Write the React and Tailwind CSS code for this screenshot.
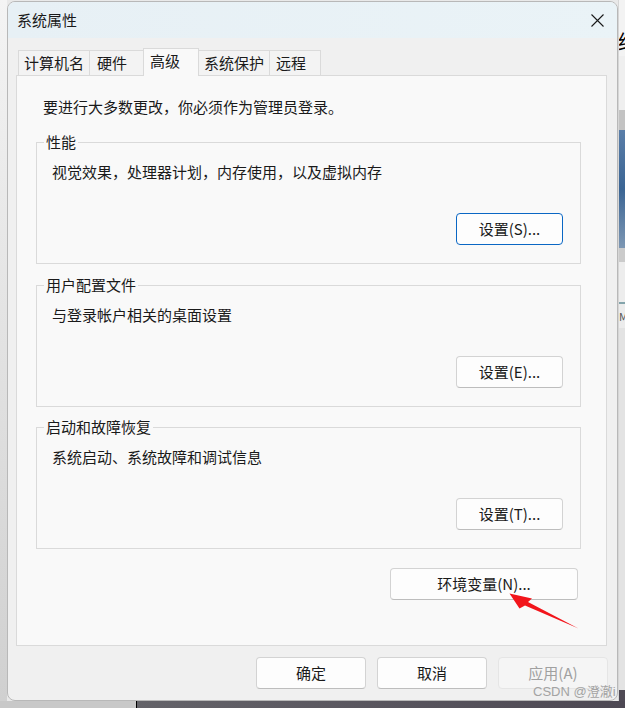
import React from "react";

function Btn({ children, w, primary, disabled }) {
  const style = primary
    ? "border-[#0a67c4] bg-[#fdfdfd] text-[#1a1a1a]"
    : disabled
    ? "border-[#e5e5e5] bg-[#f5f5f5] text-[#a0a0a0]"
    : "border-[#d3d3d3] border-b-[#bdbdbd] bg-[#fdfdfd] text-[#1a1a1a]";
  return (
    <div
      className={`${w} h-[32px] shrink-0 flex items-center justify-center rounded-[4px] border leading-[20px] ${style}`}
    >
      {children}
    </div>
  );
}

function Group({ title, text, btn, primary, className }) {
  return (
    <fieldset className={`w-[545px] border border-[#dadada] pb-[18px] ${className}`}>
      <legend className="ml-[7px] px-[2px] leading-[20px]">{title}</legend>
      <div className="pl-[15px] mt-[10px] leading-[20px]">{text}</div>
      <div className="flex justify-end pr-[17px] mt-[31px]">
        <Btn w="w-[107px]" primary={primary}>
          {btn}
        </Btn>
      </div>
    </fieldset>
  );
}

function Tab({ label, w, pl, selected, borders }) {
  if (selected) {
    return (
      <div
        className={`${w} h-[28px] flex items-center ${pl} pb-[2px] border-l border-t border-r border-[#dadada] bg-[#f9f9f9]`}
      >
        {label}
      </div>
    );
  }
  return (
    <div
      className={`${w} h-[26px] flex items-center ${pl} border-t border-b ${borders} border-[#dadada] bg-[#f3f3f3]`}
    >
      {label}
    </div>
  );
}

function Window() {
  return (
    <div className="mt-[1px] w-[611px] h-[700px] shrink-0 flex flex-col rounded-[8px] border border-[#b8b8b8] bg-[#f0f0f0] overflow-hidden">
      <div className="h-[36px] shrink-0 flex items-center justify-between pl-[9px] pr-[13px] bg-gradient-to-r from-[#e7f0f5] to-[#eaf3f7]">
        <span className="leading-[20px]">系统属性</span>
        <svg width="13" height="13" viewBox="0 0 13 13">
          <path d="M0.5 0.5L12.5 12.5M12.5 0.5L0.5 12.5" stroke="#1a1a1a" strokeWidth="1.1" />
        </svg>
      </div>
      <div className="flex flex-col pl-[8px] pt-[10px]">
        <div className="relative z-10 flex items-end h-[28px] -mb-px ml-[2px]">
          <Tab label="计算机名" w="w-[71px]" pl="pl-[5px]" borders="border-l" />
          <Tab label="硬件" w="w-[54px]" pl="pl-[7px]" borders="border-l" />
          <Tab label="高级" w="w-[56px]" pl="pl-[6px]" selected />
          <Tab label="系统保护" w="w-[70px]" pl="pl-[5px]" borders="" />
          <Tab label="远程" w="w-[52px]" pl="pl-[6px]" borders="border-l border-r" />
        </div>
        <div className="w-[591px] h-[571px] border border-[#dadada] bg-[#f9f9f9] flex flex-col pl-[19px] pt-[21px]">
          <div className="ml-[7px] leading-[20px]">要进行大多数更改，你必须作为管理员登录。</div>
          <div className="w-[545px] flex flex-col mt-[15px]">
            <Group
              title="性能"
              text="视觉效果，处理器计划，内存使用，以及虚拟内存"
              btn="设置(S)..."
              primary
            />
            <Group
              title="用户配置文件"
              text="与登录帐户相关的桌面设置"
              btn="设置(E)..."
              className="mt-[11px]"
            />
            <Group
              title="启动和故障恢复"
              text="系统启动、系统故障和调试信息"
              btn="设置(T)..."
              className="mt-[10px]"
            />
            <div className="flex justify-end pr-[3px] mt-[19px]">
              <Btn w="w-[188px]">环境变量(N)...</Btn>
            </div>
          </div>
        </div>
        <div className="flex justify-end gap-[11px] pr-[9px] mt-[11px]">
          <Btn w="w-[110px]">确定</Btn>
          <Btn w="w-[110px]">取消</Btn>
          <Btn w="w-[110px]" disabled>
            应用(A)
          </Btn>
        </div>
      </div>
    </div>
  );
}

function RightStrip() {
  return (
    <div className="w-[7px] shrink-0 flex flex-col overflow-hidden border-l border-[#d6d6d6]">
      <div className="h-[30px] bg-[#f3f3f3]" />
      <div className="h-[26px] bg-[#f3f3f3] overflow-hidden text-[20px] leading-[24px] text-black -ml-[1px]">纷</div>
      <div className="h-[54px] bg-[#efefef]" />
      <div className="h-[20px] bg-[#c3c3c3]" />
      <div className="h-[118px] bg-gradient-to-b from-[#5a7ea8] via-[#3b6594] to-[#7d97b3]" />
      <div className="h-[14px] bg-[#cbcbcb]" />
      <div className="h-[40px] bg-[#ededed]" />
      <div className="h-[2px] bg-[#84a4ab]" />
      <div className="h-[24px] bg-[#ececec] overflow-hidden text-[11px] leading-[24px] text-[#555] whitespace-nowrap">Mi</div>
      <div className="h-[362px] bg-[#e3e3e3]" />
      <div className="h-[11px] bg-[#4f4a55]" />
    </div>
  );
}

export default function App() {
  return (
    <div className="relative w-[625px] h-[708px] flex flex-col overflow-hidden bg-[#e9e9e9] font-['Noto_Sans_CJK_SC',sans-serif] text-[15px] text-[#1a1a1a]">
      <div className="flex h-[701px]">
        <div className="w-[7px] shrink-0 bg-gradient-to-b from-[#f4f4f4] to-[#d0d0d0]" />
        <Window />
        <RightStrip />
      </div>
      <div className="flex h-[7px]">
        <div className="w-[136px] bg-[#c8c8c8]" />
        <div className="w-px bg-black" />
        <div className="flex-1 bg-gradient-to-r from-[#646369] to-[#4d4853]" />
      </div>
      <svg
        className="absolute left-0 top-0 pointer-events-none"
        width="625"
        height="708"
        viewBox="0 0 625 708"
      >
        <polygon
          points="509.5,593.5 532,598.5 528,602 578.5,628.5 525,605.5 519.5,608.5"
          fill="#f2151b"
        />
      </svg>
      <div className="absolute left-[533px] top-[683px] whitespace-nowrap text-[13px] leading-[18px] text-[#a3a3a3] font-['Liberation_Sans','Noto_Sans_CJK_SC',sans-serif]">
        CSDN @澄澈i
      </div>
    </div>
  );
}
